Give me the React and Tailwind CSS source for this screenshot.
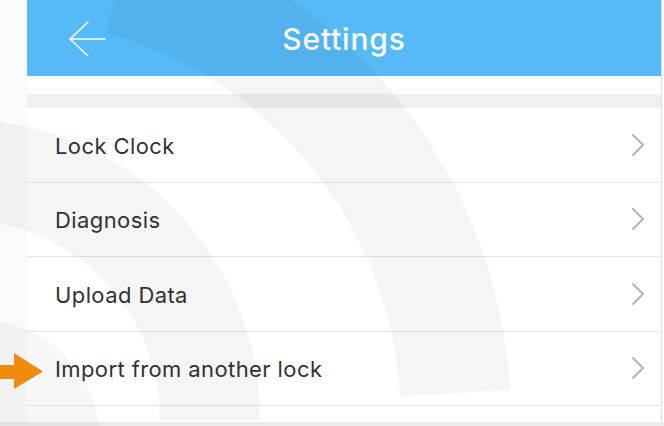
import React from 'react';

const items = ['Lock Clock', 'Diagnosis', 'Upload Data', 'Import from another lock'];

const Chevron = () => (
  <svg width="14" height="24" viewBox="0 0 14 24" fill="none">
    <path d="M2 2 L12 12 L2 22" stroke="#b3b3b3" strokeWidth="2" strokeLinecap="round" strokeLinejoin="round" />
  </svg>
);

const App = () => {
  return (
    <div
      className="relative w-[664px] h-[426px] overflow-hidden bg-white"
      style={{ fontFamily: 'Inter, "Liberation Sans", sans-serif' }}
    >
      <div className="flex h-[422px]">
        <div className="w-[27px] shrink-0 bg-[#fafafa]"></div>

        <div className="flex-1 flex flex-col border-r border-[#dcdcdc] mr-[2px]">
          {/* header */}
          <div className="h-[76px] bg-[#56baf6] flex items-center relative">
            <svg className="absolute left-[42px] top-[21px]" width="38" height="38" viewBox="0 0 38 38" fill="none">
              <path d="M1 18 L36 18 M1 18 L19 1 M1 18 L19 35" stroke="white" strokeWidth="1.6" strokeLinecap="round" />
            </svg>
            <h1 className="w-full text-center text-white text-[30px] font-medium tracking-[0.8px] pt-[2px]">Settings</h1>
          </div>

          <div className="h-[18px] bg-white"></div>
          <div className="h-[14px] bg-[#f0f0f0]"></div>

          {/* rows */}
          <div className="flex flex-col bg-white">
            {items.map((label) => (
              <div
                key={label}
                className="h-[74.5px] flex items-center justify-between border-b border-[#e6e6e6] pl-[28px] pr-[16px]"
              >
                <span className="text-[22px] text-[#333333] tracking-[0.4px] pt-[3px]">{label}</span>
                <Chevron />
              </div>
            ))}
          </div>
          <div className="flex-1 bg-white"></div>
        </div>
      </div>
      <div className="h-[4px] bg-[#ebebeb]"></div>

      {/* faint watermark */}
      <svg className="absolute inset-0 pointer-events-none" width="664" height="426" viewBox="0 0 664 426">
        <g fill="none" stroke="rgba(0,0,0,0.04)">
          <path d="M 455 393 A 455 455 0 0 0 120 -20" strokeWidth="110" />
          <path d="M 210 420 A 250 250 0 0 0 -20 170" strokeWidth="100" />
        </g>
        <circle cx="-20" cy="440" r="120" fill="rgba(0,0,0,0.03)" />
      </svg>

      {/* orange pointer */}
      <svg className="absolute left-0 top-[353px]" width="44" height="37" viewBox="0 0 44 37">
        <path d="M0 12 L14 12 L14 0 L43 18.5 L14 36 L14 26 L0 26 Z" fill="#ef8a0c" />
      </svg>
    </div>
  );
};

export default App;
